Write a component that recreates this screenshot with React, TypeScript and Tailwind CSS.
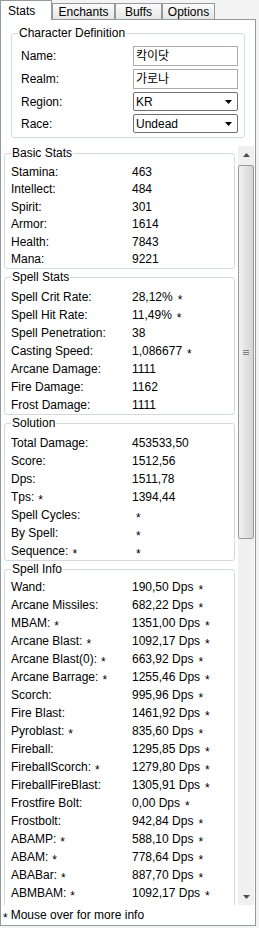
import React from "react";

type R = { l: string; la?: boolean; v: string; va?: boolean };

function Ast({ className = "" }: { className?: string }) {
  return <span className={"inline-block translate-y-[3px] " + className}>*</span>;
}

function Row({ r, tall }: { r: R; tall?: boolean }) {
  return (
    <div className={tall ? "flex h-[18px] items-center" : "flex h-[17.5px] items-center"}>
      <div className="w-[121px] shrink-0 whitespace-nowrap">
        {r.l}
        {r.la && <Ast className="ml-[4px]" />}
      </div>
      <div className="whitespace-nowrap">
        {r.v}
        {r.va && (r.v ? <Ast className="ml-[5px]" /> : <Ast className="ml-[4px]" />)}
      </div>
    </div>
  );
}

function Group({
  title,
  rows,
  tall,
  className = "",
  inner = "pt-[4px]",
}: {
  title: string;
  rows: R[];
  tall?: boolean;
  className?: string;
  inner?: string;
}) {
  return (
    <fieldset className={"rounded-[3px] border border-[#d3d9df] px-[6px] " + className}>
      <legend className="px-[1px] leading-[14px]">{title}</legend>
      <div className={"flex flex-col " + inner}>
        {rows.map((r, i) => (
          <Row key={i} r={r} tall={tall} />
        ))}
      </div>
    </fieldset>
  );
}

const basic: R[] = [
  { l: "Stamina:", v: "463" },
  { l: "Intellect:", v: "484" },
  { l: "Spirit:", v: "301" },
  { l: "Armor:", v: "1614" },
  { l: "Health:", v: "7843" },
  { l: "Mana:", v: "9221" },
];

const spell: R[] = [
  { l: "Spell Crit Rate:", v: "28,12%", va: true },
  { l: "Spell Hit Rate:", v: "11,49%", va: true },
  { l: "Spell Penetration:", v: "38" },
  { l: "Casting Speed:", v: "1,086677", va: true },
  { l: "Arcane Damage:", v: "1111" },
  { l: "Fire Damage:", v: "1162" },
  { l: "Frost Damage:", v: "1111" },
];

const solution: R[] = [
  { l: "Total Damage:", v: "453533,50" },
  { l: "Score:", v: "1512,56" },
  { l: "Dps:", v: "1511,78" },
  { l: "Tps:", la: true, v: "1394,44" },
  { l: "Spell Cycles:", v: "", va: true },
  { l: "By Spell:", v: "", va: true },
  { l: "Sequence:", la: true, v: "", va: true },
];

const info: R[] = [
  { l: "Wand:", v: "190,50 Dps", va: true },
  { l: "Arcane Missiles:", v: "682,22 Dps", va: true },
  { l: "MBAM:", la: true, v: "1351,00 Dps", va: true },
  { l: "Arcane Blast:", la: true, v: "1092,17 Dps", va: true },
  { l: "Arcane Blast(0):", la: true, v: "663,92 Dps", va: true },
  { l: "Arcane Barrage:", la: true, v: "1255,46 Dps", va: true },
  { l: "Scorch:", v: "995,96 Dps", va: true },
  { l: "Fire Blast:", v: "1461,92 Dps", va: true },
  { l: "Pyroblast:", la: true, v: "835,60 Dps", va: true },
  { l: "Fireball:", v: "1295,85 Dps", va: true },
  { l: "FireballScorch:", la: true, v: "1279,80 Dps", va: true },
  { l: "FireballFireBlast:", v: "1305,91 Dps", va: true },
  { l: "Frostfire Bolt:", v: "0,00 Dps", va: true },
  { l: "Frostbolt:", v: "942,84 Dps", va: true },
  { l: "ABAMP:", la: true, v: "588,10 Dps", va: true },
  { l: "ABAM:", la: true, v: "778,64 Dps", va: true },
  { l: "ABABar:", la: true, v: "887,70 Dps", va: true },
  { l: "ABMBAM:", la: true, v: "1092,17 Dps", va: true },
];

function Arrow({ down }: { down?: boolean }) {
  return (
    <svg width="7" height="4" viewBox="0 0 7 4">
      {down ? <path d="M0 0 H7 L3.5 4 Z" fill="#4d4d4d" /> : <path d="M0 4 H7 L3.5 0 Z" fill="#4d4d4d" />}
    </svg>
  );
}

function Combo({ value }: { value: string }) {
  return (
    <div className="flex h-[19px] w-[105px] items-center justify-between rounded-[2px] border border-[#707070] bg-white pl-[2px] pr-[5px]">
      <span>{value}</span>
      <svg width="7" height="4" viewBox="0 0 7 4">
        <path d="M0 0 H7 L3.5 4 Z" fill="#000" />
      </svg>
    </div>
  );
}

function Field({ value }: { value: string }) {
  return (
    <div className="flex h-[20px] w-[105px] items-center border border-[#abadb3] bg-white pl-[2px]">
      {value}
    </div>
  );
}

export default function App() {
  return (
    <div className="h-[928px] w-[259px] overflow-hidden bg-[#f4f4f4] font-['Liberation_Sans','Noto_Sans_CJK_KR',sans-serif] text-[12px] leading-[14px] text-black">
      {/* tabs */}
      <div className="flex h-[19px] items-end">
        <div className="relative z-10 -mb-[1px] flex h-[20px] w-[52px] items-center border-l border-r border-t border-[#919b9c] bg-white pl-[7px]">
          Stats
        </div>
        <div className="flex h-[16px] w-[63px] items-center justify-center border-l border-r border-t border-[#919b9c] bg-gradient-to-b from-[#fbfbfb] to-[#e6e6e6]">
          Enchants
        </div>
        <div className="flex h-[16px] w-[47px] items-center justify-center border-l border-r border-t border-[#919b9c] bg-gradient-to-b from-[#fbfbfb] to-[#e6e6e6]">
          Buffs
        </div>
        <div className="flex h-[16px] w-[53px] items-center justify-center border-l border-r border-t border-[#919b9c] bg-gradient-to-b from-[#fbfbfb] to-[#e6e6e6]">
          Options
        </div>
      </div>

      {/* panel */}
      <div className="flex h-[907px] w-[256px] flex-col border border-[#919b9c] bg-white">
        <fieldset className="mx-[10px] mt-[6px] rounded-[3px] border border-[#d3d9df] px-[6px] pb-[4px]">
          <legend className="px-[1px] leading-[14px]">Character Definition</legend>
          <div className="flex flex-col gap-[3px] pl-[3px] pt-[6px]">
            <div className="flex items-center">
              <div className="w-[112px]">Name:</div>
              <Field value="칵이닷" />
            </div>
            <div className="flex items-center">
              <div className="w-[112px]">Realm:</div>
              <Field value="가로나" />
            </div>
            <div className="flex items-center">
              <div className="w-[112px]">Region:</div>
              <Combo value="KR" />
            </div>
            <div className="flex items-center">
              <div className="w-[112px]">Race:</div>
              <Combo value="Undead" />
            </div>
          </div>
        </fieldset>

        <div className="mt-[8px] flex h-[759px] overflow-hidden">
          <div className="ml-[3px] flex w-[231px] flex-col gap-[1px]">
            <Group title="Basic Stats" rows={basic} inner="pt-[3px]" />
            <Group title="Spell Stats" rows={spell} tall />
            <Group title="Solution" rows={solution} tall className="pb-[0px]" />
            <Group title="Spell Info" rows={info} tall inner="pt-[2px]" className="pb-[20px]" />
          </div>
          <div className="ml-[3px] flex w-[16px] flex-col bg-[#f0f0f0]">
            <div className="flex h-[17px] items-center justify-center">
              <Arrow />
            </div>
            <div className="flex-1 pt-[2px]">
              <div className="flex h-[374px] items-center justify-center rounded-[2px] border border-[#9a9a9a] bg-gradient-to-r from-[#f2f2f2] to-[#d4d4d4]">
                <div className="flex flex-col gap-[1px]">
                  <div className="h-px w-[6px] bg-[#808080]" />
                  <div className="h-px w-[6px] bg-[#808080]" />
                  <div className="h-px w-[6px] bg-[#808080]" />
                </div>
              </div>
            </div>
            <div className="flex h-[17px] items-center justify-center">
              <Arrow down />
            </div>
          </div>
        </div>

        <div className="flex h-[20px] items-center pl-[2px]">
          <Ast />
          <span className="ml-[3px]">Mouse over for more info</span>
        </div>
      </div>
    </div>
  );
}
